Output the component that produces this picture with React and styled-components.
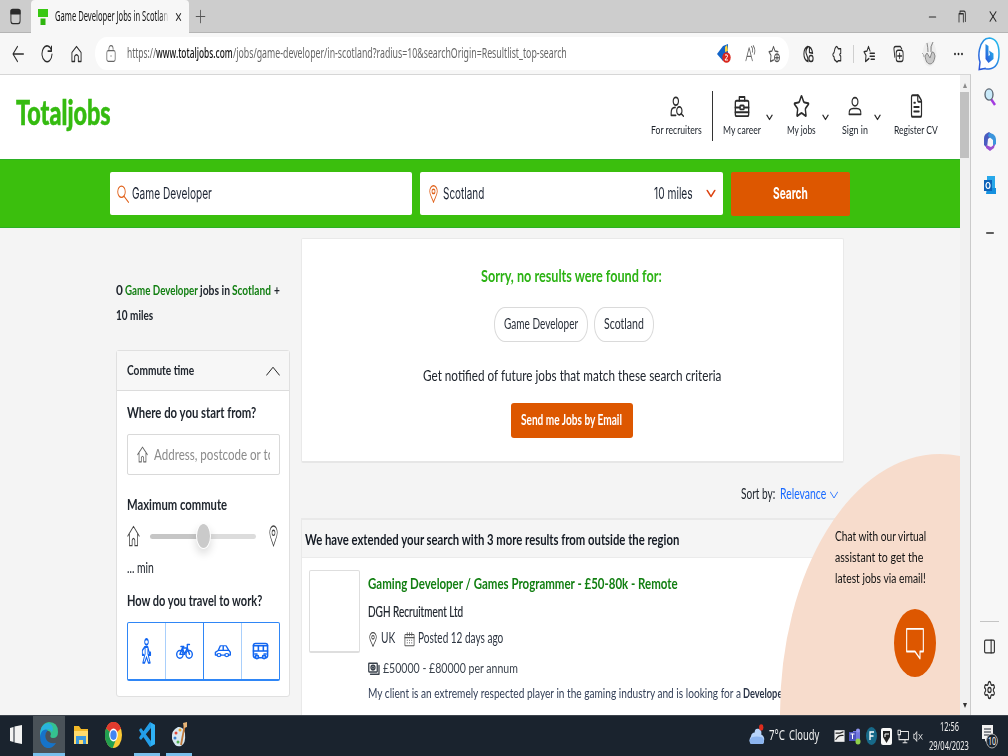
import React, { useLayoutEffect, useRef, useState } from "react";
import styled, { createGlobalStyle } from "styled-components";
import { Star, FileText, Settings, PanelRight, Plus, X, Minus } from "lucide-react";

const GlobalStyle = createGlobalStyle`
  * { box-sizing: border-box; }
  body { margin: 0; overflow: hidden; }
`;

const FONT = {
  page: 'Lato, "Open Sans", sans-serif',
  input: 'Inter, "Liberation Sans", sans-serif',
  system: '"Noto Sans", "Open Sans", sans-serif',
};

/* ---------- condensed text ---------- */

const FitBox = styled.span`
  display: block;
  flex: none;
  width: ${(p) => p.$w}px;
  height: ${(p) => p.$lh || 20}px;
  line-height: ${(p) => (p.$lh || 20) - 2}px;
  font-family: ${(p) => FONT[p.$font || "page"]};
  font-size: ${(p) => p.$size || 15}px;
  font-weight: ${(p) => p.$weight || 400};
  color: ${(p) => p.$color || "#20262e"};
  margin-left: ${(p) => p.$ml || 0}px;
  margin-top: ${(p) => p.$mt || 0}px;
  -webkit-text-stroke: ${(p) => p.$stroke || 0}px currentColor;
`;
const FitInner = styled.span`
  display: inline-block;
  white-space: pre;
  transform-origin: 0 50%;
`;

function Fit({ w, size, weight, color, lh, font, ml, mt, stroke, children }) {
  const ref = useRef(null);
  const [scale, setScale] = useState(1);
  useLayoutEffect(() => {
    if (ref.current.offsetWidth) setScale(w / ref.current.offsetWidth);
  }, [w, children]);
  return (
    <FitBox $w={w} $size={size} $weight={weight} $color={color} $lh={lh} $font={font} $ml={ml} $mt={mt} $stroke={stroke}>
      <FitInner ref={ref} style={{ transform: `scaleX(${scale})` }}>{children}</FitInner>
    </FitBox>
  );
}

const Slot = styled.span`
  display: flex;
  flex: none;
  align-items: center;
  justify-content: center;
  width: ${(p) => p.$w}px;
  height: ${(p) => (p.$h ? `${p.$h}px` : "auto")};
  margin-left: ${(p) => p.$ml || 0}px;
  margin-top: ${(p) => p.$mt || 0}px;
  color: ${(p) => p.$color || "#2b2b2b"};
`;

function Glyph({ w, h, box = "0 0 24 24", sw = 1.8, children, fill = "none" }) {
  return (
    <svg width={w} height={h} viewBox={box} preserveAspectRatio="none" fill={fill}
      stroke="currentColor" strokeWidth={sw} strokeLinecap="round" strokeLinejoin="round">
      {children}
    </svg>
  );
}
const stretch = { preserveAspectRatio: "none" };

const HomeGlyph = ({ w, h, sw }) => (
  <Glyph w={w} h={h} sw={sw}>
    <path d="M1.500 12 12 1.500 22.500 12M4.500 10v12.500h5v-6q2.500-4 5 0v6h5V10" />
  </Glyph>
);
const PinGlyph = ({ w, h, sw = 2 }) => (
  <Glyph w={w} h={h} sw={sw}>
    <path d="M12 23C8 17 2 13 2 8.500a10 7.500 0 0 1 20 0C22 13 16 17 12 23Z" />
    <ellipse cx="12" cy="8.500" rx="4" ry="2.800" />
  </Glyph>
);

/* ---------- window frame ---------- */

const Screen = styled.div`
  display: flex;
  flex-direction: column;
  width: 1008px;
  height: 756px;
  overflow: hidden;
  background: #f7f7f7;
`;
const TabBar = styled.div`
  display: flex;
  height: 33px;
  background: #cdcdcd;
  box-shadow: inset 0 -1px 0 #b4b4b4;
`;
const Tab = styled.div`
  display: flex;
  align-items: center;
  width: 158px;
  height: 33px;
  padding-left: 7px;
  background: #f7f7f7;
  border-radius: 4px 4px 0 0;
`;
const TitleFade = styled.span`
  width: 114px;
  margin-left: 7px;
  overflow: hidden;
  mask-image: linear-gradient(90deg, #000 92%, transparent 100%);
`;
const WindowControls = styled.div`
  display: flex;
  margin-left: auto;
`;
const Toolbar = styled.div`
  display: flex;
  align-items: center;
  flex: none;
  height: 41px;
  padding-left: 4px;
  background: #f7f7f7;
`;
const AddressPill = styled.div`
  display: flex;
  align-items: center;
  flex: none;
  width: 694px;
  height: 33px;
  margin-left: 5px;
  padding-right: 4px;
  background: #fff;
  border-radius: 12px / 17px;
`;
const PillActions = styled.div`
  display: flex;
  margin-left: auto;
`;
const ToolDivider = styled.span`
  width: 1px;
  height: 18px;
  margin: 0 1px;
  background: #cfcfcf;
`;
const Body = styled.div`
  display: flex;
  flex: none;
  height: 641px;
`;
const Page = styled.div`
  position: relative;
  flex: none;
  width: 960px;
  height: 641px;
  overflow: hidden;
  background: #f4f4f4;
  border-top: 1px solid #d6d6d6;
`;
const ScrollTrack = styled.div`
  display: flex;
  flex-direction: column;
  align-items: center;
  flex: none;
  width: 11px;
  background: #f1f1f1;
  border-top: 1px solid #d6d6d6;
  border-right: 1px solid #cbcbcb;
  padding: 8px 0 7px;
`;
const ScrollThumb = styled.div`
  width: 9px;
  height: 66px;
  margin: 4px 1px 0 0;
  background: #c1c1c1;
`;
const Arrow = styled.span`
  border-left: 2.500px solid transparent;
  border-right: 2.500px solid transparent;
  border-bottom: ${(p) => (p.$down ? "0" : "5px solid #8b8b8b")};
  border-top: ${(p) => (p.$down ? "5px solid #333" : "0")};
  margin-top: ${(p) => (p.$down ? "auto" : "0")};
`;
const Sidebar = styled.div`
  display: flex;
  flex-direction: column;
  align-items: center;
  flex: 1;
  background: #f7f7f7;
`;
const SidebarRule = styled.span`
  width: 19px;
  height: 1px;
  margin-top: auto;
  background: #c4c4c4;
`;

/* ---------- site header ---------- */

const SiteHeader = styled.header`
  display: flex;
  height: 84px;
  padding: 0 22px 0 16px;
  background: #fff;
`;
const Nav = styled.nav`
  display: flex;
  margin-left: auto;
`;
const NavEntry = styled.div`
  display: flex;
  flex-direction: column;
  align-items: center;
  margin-left: ${(p) => p.$ml || 0}px;
  padding-top: 18px;
`;
const NavDivider = styled.span`
  width: 1px;
  height: 50px;
  margin: 16px 0 0 10px;
  background: #333;
`;

function NavItem({ label, w, ml, children }) {
  return (
    <NavEntry $ml={ml}>
      <Slot $w={w} $h={26}>{children}</Slot>
      <Fit w={w} size={12} lh={14} mt={5}>{label}</Fit>
    </NavEntry>
  );
}
const NavCaret = ({ ml }) => (
  <Slot $w={8} $ml={ml} $h={84}>
    <Glyph w={7} h={7} sw={4}><path d="M3 4 12 19 21 4" /></Glyph>
  </Slot>
);

const SearchBar = styled.div`
  display: flex;
  align-items: center;
  height: 69px;
  padding-left: 110px;
  gap: 8px;
  background: #3bbf0d;
  box-shadow: inset 0 1px 0 #2cb024, inset 0 -1px 0 #2cb024;
`;
const SearchField = styled.div`
  display: flex;
  align-items: center;
  width: ${(p) => p.$w}px;
  height: 43px;
  padding-left: 7px;
  background: #fff;
  border-radius: 2px;
`;
const OrangeButton = styled.div`
  display: flex;
  align-items: center;
  justify-content: center;
  width: ${(p) => p.$w}px;
  height: ${(p) => p.$h}px;
  margin-top: ${(p) => p.$mt || 0}px;
  background: #dd5700;
  border-radius: ${(p) => p.$r || 2}px;
`;

/* ---------- content ---------- */

const Columns = styled.div`
  display: flex;
  align-items: flex-start;
  padding-left: 116px;
`;
const Filters = styled.aside`
  width: 174px;
  padding-top: 51px;
`;
const SummaryLine = styled.div`
  display: flex;
  height: 25px;
`;
const FilterCard = styled.section`
  height: 347px;
  margin-top: 21px;
  background: #fff;
  border: 1px solid #e0e0e0;
  border-radius: 3px;
`;
const FilterHead = styled.div`
  display: flex;
  align-items: center;
  height: 40px;
  padding: 0 9px 0 10px;
  justify-content: space-between;
  background: #f7f7f7;
  border-bottom: 1px solid #dcdcdc;
`;
const FilterBody = styled.div`
  padding: 12px 9px 0 10px;
`;
const AddressInput = styled.div`
  display: flex;
  align-items: center;
  height: 41px;
  margin-top: 11px;
  padding-left: 9px;
  border: 1px solid #d9d9d9;
  border-radius: 2px;
`;
const Placeholder = styled.div`
  width: 116px;
  margin-left: 6px;
  overflow: hidden;
`;
const SliderRow = styled.div`
  display: flex;
  align-items: center;
  height: 24px;
  margin-top: 9px;
`;
const Track = styled.div`
  display: flex;
  align-items: center;
  justify-content: center;
  width: 106px;
  height: 5px;
  margin: 0 13px 0 10px;
  border-radius: 3px;
  background: linear-gradient(90deg, #c6c6c6 50%, #dcdcdc 50%);
`;
const Thumb = styled.span`
  flex: none;
  width: 15px;
  height: 26px;
  border: 1px solid #fff;
  border-radius: 50%;
  background: #cacaca;
  box-shadow: 0 5px 9px rgba(0, 0, 0, 0.14);
`;
const ModeGroup = styled.div`
  display: flex;
  height: 59px;
  margin-top: 11px;
  border: 1px solid #2f86f6;
  border-bottom-width: 2px;
  border-radius: 2px;
`;
const Mode = styled.div`
  display: flex;
  flex: 1;
  align-items: center;
  justify-content: center;
  color: #1266f1;
  border-right: ${(p) => (p.$edge ? `1px solid ${p.$edge}` : "0")};
`;
const Results = styled.main`
  width: 543px;
  margin-left: 11px;
  padding-top: 10px;
`;
const EmptyCard = styled.section`
  display: flex;
  flex-direction: column;
  align-items: center;
  height: 225px;
  padding: 28px 2px 0 0;
  background: #fff;
  border: 1px solid #e9e9e9;
  border-bottom: 2px solid #e6e6e6;
  border-radius: 2px;
`;
const Pills = styled.div`
  display: flex;
  gap: 6px;
  margin: 20px 0 0 5px;
`;
const Pill = styled.div`
  display: flex;
  align-items: center;
  justify-content: center;
  width: ${(p) => p.$w}px;
  height: 35px;
  border: 1px solid #dadada;
  border-radius: 11px / 17px;
`;
const SortRow = styled.div`
  display: flex;
  align-items: center;
  height: 20px;
  margin: 22px 0 13px 440px;
`;
const ResultList = styled.section`
  height: 210px;
  background: #fff;
  border: 1px solid #e9e9e9;
  border-top: 2px solid #e9e9e9;
`;
const ListHead = styled.div`
  height: 38px;
  padding: 10px 0 0 3px;
  background: #f5f5f5;
  border-bottom: 1px solid #ebebeb;
`;
const Job = styled.article`
  display: flex;
  padding: 12px 0 0 7px;
`;
const LogoBox = styled.div`
  width: 51px;
  height: 83px;
  border: 1px solid #dedede;
  border-bottom-width: 2px;
  border-radius: 2px;
`;
const JobText = styled.div`
  margin-left: 8px;
  padding-top: 4px;
`;
const JobLine = styled.div`
  display: flex;
  align-items: center;
  height: 20px;
  margin-top: ${(p) => p.$mt || 0}px;
`;

/* ---------- chat bubble lies over the page corner ---------- */

const ChatBlob = styled.div`
  position: absolute;
  left: 780px;
  top: 379px;
  width: 320px;
  height: 520px;
  padding: 73px 0 0 55px;
  border-radius: 50%;
  background: #f7dccc;
`;
const ChatButton = styled.div`
  display: flex;
  align-items: center;
  justify-content: center;
  width: 42px;
  height: 68px;
  margin: 19px 0 0 59px;
  border-radius: 50%;
  background: #dd5700;
  color: #fff;
`;

/* ---------- taskbar ---------- */

const Taskbar = styled.div`
  display: flex;
  flex: none;
  height: 41px;
  background: #1a232e;
  border-top: 1px solid #3c434c;
`;
const TaskCell = styled.div`
  display: flex;
  align-items: center;
  justify-content: center;
  width: ${(p) => p.$w || 32}px;
  margin-right: ${(p) => p.$mr || 0}px;
  background: ${(p) => (p.$active ? "#4a5259" : "none")};
  border-bottom: 3px solid ${(p) => (p.$open ? "#79bfec" : "transparent")};
`;
const Tray = styled.div`
  display: flex;
  align-items: center;
  margin-left: auto;
  padding-right: 10px;
`;
const Clock = styled.div`
  display: flex;
  flex-direction: column;
  align-items: center;
  width: 48px;
  margin-top: 2px;
`;

export default function App() {
  return (
    <>
      <GlobalStyle />
      <Screen>
        <TabBar>
          <Slot $w={31}>
            <Glyph w={11} h={17} sw={2}>
              <rect x="2" y="2" width="20" height="20" rx="4" />
              <path d="M2 3h20v5H2z" fill="currentColor" />
            </Glyph>
          </Slot>
          <Tab>
            <svg width="10" height="16" viewBox="0 0 10 16">
              <path d="M0 0h10v8H0z" fill="#38c812" /><path d="M2.500 9.500h5V16h-5z" fill="#2fb50f" />
            </svg>
            <TitleFade><Fit w={113} size={13.5} font="system" color="#111">Game Developer Jobs in Scotlan</Fit></TitleFade>
            <Slot $w={18}><X width={9} height={14} {...stretch} /></Slot>
          </Tab>
          <Slot $w={23}><Plus width={15} height={21} strokeWidth={1.400} color="#555" {...stretch} /></Slot>
          <WindowControls>
            <Slot $w={30}><Minus width={11} height={14} {...stretch} /></Slot>
            <Slot $w={30}>
              <Glyph w={8} h={13} sw={2.500}><path d="M3 22V7h13v15M6 6V2h12q4 0 4 5v14" /></Glyph>
            </Slot>
            <Slot $w={31}><X width={12} height={19} strokeWidth={1.600} {...stretch} /></Slot>
          </WindowControls>
        </TabBar>

        <Toolbar>
          <Slot $w={28}>
            <Glyph w={12} h={18} sw={1.800}><path d="M23 12H2M11 2 2 12l9 10" /></Glyph>
          </Slot>
          <Slot $w={30}>
            <Glyph w={12} h={19} sw={2}><path d="M21 3v6h-7M21 8A10 10 0 1 0 22 13" /></Glyph>
          </Slot>
          <Slot $w={28}>
            <Glyph w={11} h={18} sw={2}><path d="M2 10 12 2l10 8v12h-6v-7q-4-4-8 0v7H2Z" /></Glyph>
          </Slot>
          <AddressPill>
            <Slot $w={32} $color="#666">
              <Glyph w={10} h={17} sw={1.800}>
                <rect x="2" y="8" width="20" height="15" rx="3" /><path d="M7 8V5a5 4 0 0 1 10 0v1" /><path d="M12 15v1" />
              </Glyph>
            </Slot>
            <Fit w={29} size={14} font="system" color="#666">https://</Fit>
            <Fit w={77} size={14} font="system" color="#111" weight={500}>www.totaljobs.com</Fit>
            <Fit w={334} size={14} font="system" color="#666">/jobs/game-developer/in-scotland?radius=10&amp;searchOrigin=Resultlist_top-search</Fit>
            <PillActions>
              <Slot $w={27}>
                <svg width="14" height="19" viewBox="0 0 14 19">
                  <path d="M0 10 6 2 11 0v12L6 17Z" fill="#1264c8" /><path d="M8 3 10 1l1 6-3 1Z" fill="#ffd33b" />
                  <ellipse cx="9.500" cy="13.500" rx="4.200" ry="5.300" fill="#d9281f" />
                  <path d="M8 11q3-1 2.500 1.500L8 16h3" stroke="#fff" fill="none" />
                </svg>
              </Slot>
              <Slot $w={26} $color="#666">
                <Glyph w={11} h={17} sw={1.700}><path d="M2 22 9 4l7 18M4.500 16h9M14 2q4 3 2 8M18 1q6 6 2 12" /></Glyph>
              </Slot>
              <Slot $w={22} $color="#555">
                <Glyph w={12} h={18} sw={1.800}>
                  <path d="M11 20 5 22l1-8-4-5 6-1 3-6 3 6 6 1" /><ellipse cx="18" cy="17" rx="5" ry="5" /><path d="M18 14v6M15 17h6" />
                </Glyph>
              </Slot>
            </PillActions>
          </AddressPill>
          <Slot $w={28} $ml={5}>
            <Glyph w={11} h={18} sw={2.300}>
              <path d="M11 22Q2 20 2 12T10 2q9 0 11 9M10 3Q4 8 8 13t3 9M14 3v7l7 1" /><rect x="13" y="14" width="9" height="8" rx="4" />
            </Glyph>
          </Slot>
          <Slot $w={30}>
            <Glyph w={10} h={18} sw={2.300}><path d="M7 5q4-6 8 0h6v6q-5 1.500 0 4v6h-6q-3 3-6 0-4-1-4-5-6-3 0-6Z" /></Glyph>
          </Slot>
          <ToolDivider />
          <Slot $w={28}>
            <Glyph w={12} h={18} sw={2}><path d="M12 18 5 22l1-8-4-5 6-1 3-6 3 6M14 11h9M14 15h9M16 19h7" /></Glyph>
          </Slot>
          <Slot $w={30}>
            <Glyph w={11} h={18} sw={2}><rect x="7" y="7" width="15" height="15" rx="4" /><path d="M4 16 2 5q0-3 4-3h10l3 3M14.500 11v7M10 14.500h9" /></Glyph>
          </Slot>
          <Slot $w={32}>
            <svg width="16" height="26" viewBox="0 0 16 26">
              <ellipse cx="8.500" cy="13" rx="7" ry="12.500" fill="#eeeeee" />
              <path d="M6 2q1 5 1 9M12 1q-3 4-2 10M4 15q1 8 5 8t5-8q-1-5-3-4l-2 6-3-5Z" fill="#c8c8c8" stroke="#8a8a8a" strokeWidth="1" />
              <path d="M1 12q2 1 2 4" stroke="#aaa" fill="none" />
            </svg>
          </Slot>
          <Slot $w={26}>
            <svg width="9" height="4" viewBox="0 0 9 4" fill="#222"><ellipse cx="1" cy="2" rx="0.900" ry="1.200" /><ellipse cx="4.500" cy="2" rx="0.900" ry="1.200" /><ellipse cx="8" cy="2" rx="0.900" ry="1.200" /></svg>
          </Slot>
          <Slot $w={36}>
            <svg width="22" height="34" viewBox="0 0 22 34">
              <defs>
                <linearGradient id="bingRing" x1="0" y1="1" x2="1" y2="0"><stop offset="0" stopColor="#2b50d8" /><stop offset="1" stopColor="#25c3ee" /></linearGradient>
              </defs>
              <path d="M1.200 32.500 2 25Q0 20 1.500 12.500 4 1 11.500 1 21 2 21 16.500T11 32q-4 0-4-.5Z" fill="#fff" stroke="url(#bingRing)" strokeWidth="1.500" />
              <path d="M7.500 7v15l3 4 5-4v-5.500l-4.500-3 1 4.500-1.500 1V9Z" fill="url(#bingRing)" />
            </svg>
          </Slot>
        </Toolbar>

        <Body>
          <Page>
            <SiteHeader>
              <Fit w={95} size={33.500} weight={900} color="#35bb10" lh={42} mt={17} stroke={0.500}>Totaljobs</Fit>
              <Nav>
                <NavItem label="For recruiters" w={51}>
                  <Glyph w={14} h={21} sw={2}>
                    <circle cx="10" cy="6" r="4.500" /><path d="M10 22H2v-3q0-6 7-6" /><ellipse cx="16" cy="17" rx="4.500" ry="4.500" /><path d="m19 20 4 3" />
                  </Glyph>
                </NavItem>
                <NavDivider />
                <NavItem label="My career" w={38} ml={10}>
                  <Glyph w={16} h={23} sw={2}>
                    <rect x="2" y="6" width="20" height="16" rx="2" /><path d="M8 6V2h8v4M2 13h7M15 13h7M2 18h20" /><rect x="9" y="11" width="6" height="4" rx="1" />
                  </Glyph>
                </NavItem>
                <NavCaret ml={4} />
                <NavItem label="My jobs" w={29} ml={14}><Star width={17} height={25} strokeWidth={2} {...stretch} /></NavItem>
                <NavCaret ml={5} />
                <NavItem label="Sign in" w={26} ml={13}>
                  <Glyph w={14} h={20} sw={2}><ellipse cx="12" cy="7" rx="5" ry="5" /><path d="M2 22q-1-7 7-7h6q8 0 7 7Z" /></Glyph>
                </NavItem>
                <NavCaret ml={5} />
                <NavItem label="Register CV" w={44} ml={13}><FileText width={15} height={26} strokeWidth={1.900} {...stretch} /></NavItem>
              </Nav>
            </SiteHeader>

            <SearchBar>
              <SearchField $w={302}>
                <Glyph w={12} h={18} sw={1.800}><g stroke="#e0611a"><circle cx="9" cy="9" r="7.500" /><path d="m14 15 9 8" /></g></Glyph>
                <Fit w={80} size={16.500} font="input" color="#1c2433" ml={3}>Game Developer</Fit>
              </SearchField>
              <SearchField $w={303}>
                <Slot $w={12} $color="#e0611a"><PinGlyph w={9} h={18} /></Slot>
                <Fit w={41} size={16.500} font="input" color="#1c2433" ml={4}>Scotland</Fit>
                <Fit w={39} size={16.500} font="input" color="#1c2433" ml={170}>10 miles</Fit>
                <Slot $w={10} $ml={13} $color="#dd4310"><Glyph w={10} h={9} sw={4}><path d="M3 4 12 20 21 4" /></Glyph></Slot>
              </SearchField>
              <OrangeButton $w={119} $h={44}><Fit w={35} size={16.500} font="input" weight={700} color="#fff">Search</Fit></OrangeButton>
            </SearchBar>

            <Columns>
              <Filters>
                <SummaryLine>
                  <Fit w={7} size={13.500} weight={700} lh={25}>0</Fit>
                  <Fit w={73} size={13.500} weight={700} lh={25} ml={2} color="#127f12">Game Developer</Fit>
                  <Fit w={30} size={13.500} weight={700} lh={25} ml={2}>jobs in</Fit>
                  <Fit w={39} size={13.500} weight={700} lh={25} ml={2} color="#127f12">Scotland</Fit>
                  <Fit w={6} size={13.500} weight={700} lh={25} ml={3}>+</Fit>
                </SummaryLine>
                <SummaryLine><Fit w={37} size={13.500} weight={700} lh={25}>10 miles</Fit></SummaryLine>
                <FilterCard>
                  <FilterHead>
                    <Fit w={67} size={13} weight={700}>Commute time</Fit>
                    <Glyph w={14} h={10} sw={1.700}><path d="M1 22 12 3 23 22" /></Glyph>
                  </FilterHead>
                  <FilterBody>
                    <Fit w={129} size={16} weight={700}>Where do you start from?</Fit>
                    <AddressInput>
                      <Slot $w={11} $color="#666"><HomeGlyph w={11} h={17} sw={1.700} /></Slot>
                      <Placeholder><Fit w={120} size={16} color="#8b8b8b">Address, postcode or to</Fit></Placeholder>
                    </AddressInput>
                    <Fit w={100} size={16} weight={700} mt={20}>Maximum commute</Fit>
                    <SliderRow>
                      <Slot $w={13} $color="#444"><HomeGlyph w={13} h={22} sw={1.400} /></Slot>
                      <Track><Thumb /></Track>
                      <Slot $w={9} $color="#444"><PinGlyph w={9} h={22} sw={1.600} /></Slot>
                    </SliderRow>
                    <Fit w={27} size={15} mt={10}>... min</Fit>
                    <Fit w={135} size={16} weight={700} mt={13}>How do you travel to work?</Fit>
                    <ModeGroup>
                      <Mode $edge="#a9cffb">
                        <Glyph w={11} h={27} sw={1.900}>
                          <ellipse cx="12" cy="3.500" rx="4" ry="2.500" /><path d="M8 8h7l3 5h3v2h-5M8 8 3 11v4h3M9 9v5l-5 8h4l4-5 4 5h4l-5-8V9" />
                        </Glyph>
                      </Mode>
                      <Mode $edge="#2f86f6">
                        <Glyph w={17} h={17} sw={2}>
                          <ellipse cx="5.500" cy="16" rx="4.500" ry="5.500" /><ellipse cx="18.500" cy="16" rx="4.500" ry="5.500" /><path d="M5.500 16 9 7h7l3 9M9 7l3 9H6M12 16l4-9V2h3M7 5h4" />
                        </Glyph>
                      </Mode>
                      <Mode $edge="#a9cffb">
                        <Glyph w={17} h={14} sw={2}>
                          <path d="M2 19v-5l4-3 3-8h8l4 8 2 3v5ZM6 11h15M13 3v8" /><circle cx="7" cy="19" r="2.700" fill="#fff" /><circle cx="18" cy="19" r="2.700" fill="#fff" />
                        </Glyph>
                      </Mode>
                      <Mode>
                        <Glyph w={17} h={18} sw={2.200}>
                          <rect x="2" y="2" width="20" height="19" rx="3" /><path d="M2 5h20M2 12h20M9 5v7M16 5v7M4 16h3M17 16h3" /><circle cx="7" cy="20" r="2.200" fill="#fff" /><circle cx="17" cy="20" r="2.200" fill="#fff" />
                        </Glyph>
                      </Mode>
                    </ModeGroup>
                  </FilterBody>
                </FilterCard>
              </Filters>

              <Results>
                <EmptyCard>
                  <Fit w={181} size={17} weight={700} color="#2cb314">Sorry, no results were found for:</Fit>
                  <Pills>
                    <Pill $w={94}><Fit w={74} size={14.500} color="#2a303a">Game Developer</Fit></Pill>
                    <Pill $w={60}><Fit w={40} size={14.500} color="#2a303a">Scotland</Fit></Pill>
                  </Pills>
                  <Fit w={298} size={16} mt={24}>Get notified of future jobs that match these search criteria</Fit>
                  <OrangeButton $w={122} $h={35} $mt={17} $r={3}><Fit w={101} size={14.500} weight={700} color="#fff">Send me Jobs by Email</Fit></OrangeButton>
                </EmptyCard>
                <SortRow>
                  <Fit w={34} size={14.500}>Sort by:</Fit>
                  <Fit w={46} size={14.500} color="#1769ff" ml={5}>Relevance</Fit>
                  <Slot $w={8} $ml={4} $color="#1769ff"><Glyph w={8} h={8} sw={2.500}><path d="M1 3 12 21 23 3" /></Glyph></Slot>
                </SortRow>
                <ResultList>
                  <ListHead><Fit w={374} size={15.500} weight={700} color="#151b24">We have extended your search with 3 more results from outside the region</Fit></ListHead>
                  <Job>
                    <LogoBox />
                    <JobText>
                      <Fit w={310} size={15} weight={700} color="#127f12">Gaming Developer / Games Programmer - £50-80k - Remote</Fit>
                      <Fit w={95} size={14.500} mt={9} stroke={0.200}>DGH Recruitment Ltd</Fit>
                      <JobLine $mt={6}>
                        <Slot $w={9} $color="#444"><PinGlyph w={8} h={15} /></Slot>
                        <Fit w={14} size={14.500} ml={4} color="#2c3440">UK</Fit>
                        <Slot $w={11} $ml={9} $color="#555">
                          <Glyph w={11} h={15} sw={1.700}><rect x="2" y="4" width="20" height="18" rx="1" /><path d="M2 9h20M7 1v5M17 1v5M12 1v5M7 13v.5M12 13v.5M17 13v.5M7 17v.5M12 17v.5M17 17v.5" /></Glyph>
                        </Slot>
                        <Fit w={85} size={14.500} ml={3} color="#2c3440">Posted 12 days ago</Fit>
                      </JobLine>
                      <JobLine $mt={10}>
                        <Slot $w={12} $color="#3a424c">
                          <Glyph w={12} h={14} sw={2.600}><rect x="1.500" y="2" width="17" height="15" rx="1" /><ellipse cx="10" cy="9.500" rx="4" ry="4" /><path d="M22 6v15H5" /><circle cx="10" cy="9.500" r="1" /></Glyph>
                        </Slot>
                        <Fit w={135} size={14} ml={3} color="#3a424c">£50000 - £80000 per annum</Fit>
                      </JobLine>
                      <JobLine $mt={5}>
                        <Fit w={373} size={14} color="#36425a">My client is an extremely respected player in the gaming industry and is looking for a</Fit>
                        <Fit w={43} size={14} weight={700} color="#2b3548" ml={2}>Developer</Fit>
                      </JobLine>
                    </JobText>
                  </Job>
                </ResultList>
              </Results>
            </Columns>

            <ChatBlob>
              <Fit w={91} size={13.500} lh={21} color="#111">Chat with our virtual</Fit>
              <Fit w={88} size={13.500} lh={21} color="#111">assistant to get the</Fit>
              <Fit w={91} size={13.500} lh={21} color="#111">latest jobs via email!</Fit>
              <ChatButton>
                <Glyph w={20} h={34} sw={1.300}><path d="M2 2h20v16h-4v5l-6-5H2Z" /></Glyph>
              </ChatButton>
            </ChatBlob>
          </Page>
          <ScrollTrack>
            <Arrow />
            <ScrollThumb />
            <Arrow $down />
          </ScrollTrack>
          <Sidebar>
            <Slot $w={36} $h={18} $mt={14}>
              <svg width="12" height="18" viewBox="0 0 12 18"><path d="m7 11 4 6" stroke="#a33be0" strokeWidth="2.400" /><ellipse cx="5" cy="6.500" rx="4" ry="5.600" fill="#c9eafa" stroke="#58636f" strokeWidth="1.300" /></svg>
            </Slot>
            <Slot $w={36} $h={20} $mt={25}>
              <svg width="12" height="19" viewBox="0 0 12 19"><path d="M5 0Q0 2 0 6v7l3 3 1-9 5-4Z" fill="#4a5cc0" /><path d="m5 1 4 1q3 2 3 6v4l-3 3V8L4 4Z" fill="#3b95dc" /><path d="m2 13 5 2 4-3-1 4-4 3-4-3Z" fill="#9a4fd0" /><ellipse cx="6.200" cy="9.500" rx="2" ry="3" fill="#f7f7f7" /></svg>
            </Slot>
            <Slot $w={36} $h={20} $mt={24}>
              <svg width="12" height="18" viewBox="0 0 12 18"><path d="M3 0h8v16H3z" fill="#28a8ea" /><path d="M3 12h9v6H2z" fill="#1490df" /><path d="M0 4h8v11H0z" fill="#0d62b8" /><ellipse cx="4" cy="9.500" rx="2" ry="3" stroke="#fff" strokeWidth="1.200" fill="none" /></svg>
            </Slot>
            <Slot $w={36} $h={20} $mt={28}><Minus width={12} height={20} strokeWidth={1.800} {...stretch} /></Slot>
            <SidebarRule />
            <Slot $w={36} $h={20} $mt={14}><PanelRight width={13} height={17} strokeWidth={2} {...stretch} /></Slot>
            <Slot $w={36} $h={22} $mt={23}><Settings width={13} height={20} strokeWidth={2} {...stretch} /></Slot>
            <Slot $w={36} $h={14} />
          </Sidebar>
        </Body>

        <Taskbar>
          <TaskCell $mr={1}>
            <svg width="12" height="19" viewBox="0 0 12 19" fill="#f2f2f2"><path d="m0 3 3.500-1v15L0 16ZM4.500 1.500 12 0v19l-7.500-1.500Z" /></svg>
          </TaskCell>
          <TaskCell $active $open>
            <svg width="18" height="26" viewBox="0 0 18 26">
              <path d="M0 14Q0 1 9 0q9 0 9 10 0 6-5 6-4 0-2-4-1-4-5-3-5 1-6 5Z" fill="#35c18f" />
              <path d="M0 14Q0 2 8 1q7 2 4 9-2-4-6-2-3 1-3 9Z" fill="#29b3dd" />
              <path d="M0 14q2-8 8-6-4 4-2 9t10 4q-4 6-9 5Q0 24 0 14Z" fill="#1673c9" />
            </svg>
          </TaskCell>
          <TaskCell>
            <svg width="16" height="20" viewBox="0 0 16 20"><path d="M1 1h5l2 3h7v15H1z" fill="#f4b927" /><path d="M1 6h14v13H1z" fill="#ffdb6c" /><path d="M3 11h10v8h-3v-4H6v4H3z" fill="#3c98dd" /></svg>
          </TaskCell>
          <TaskCell $mr={5}>
            <svg width="17" height="26" viewBox="0 0 48 48" preserveAspectRatio="none">
              <circle cx="24" cy="24" r="24" fill="#fcc934" />
              <path d="M24 24 3 12a24 24 0 0 1 42 0Z" fill="#e33b2e" /><path d="M24 12h21q-9-12-21-12Z" fill="#e33b2e" />
              <path d="M3 12a24 24 0 0 0 19 36l10-18-8-6Z" fill="#229f50" />
              <circle cx="24" cy="24" r="12" fill="#fff" /><circle cx="24" cy="24" r="9" fill="#4285f4" />
            </svg>
          </TaskCell>
          <TaskCell $w={26} $mr={6} $open>
            <svg width="17" height="25" viewBox="0 0 17 25"><path d="M11 0 16 3v19l-5 3L1 10l-1-2 2-2 10 13V6L2 18l-2-2 1-2Z" fill="#239ee8" /><path d="m12 1 4 2v19l-4 2Z" fill="#2fb1f5" /></svg>
          </TaskCell>
          <TaskCell $w={26} $open>
            <svg width="17" height="26" viewBox="0 0 17 26">
              <path d="M7 5Q0 8 1 17q3 9 9 7 5-2 4-13-2-7-7-6Z" fill="#d8e9f3" />
              <circle cx="5" cy="11" r="1.500" fill="#e34c3c" /><circle cx="9" cy="8" r="1.500" fill="#f2a62b" /><circle cx="4" cy="16" r="1.500" fill="#3b82d0" /><circle cx="7" cy="20" r="1.500" fill="#50b050" />
              <path d="M14 2 10 23" stroke="#c27a3c" strokeWidth="1.800" /><path d="m12 1 4-1v5l-3 1Z" fill="#e7b477" />
            </svg>
          </TaskCell>
          <Tray>
            <Slot $w={17} $mt={-4}>
              <svg width="16" height="21" viewBox="0 0 17 22"><path d="M2 21q-3-4 0-8 1-4 4-4 0-5 4-4 4 1 3 6 4 2 3 6 0 4-2 4Z" fill="#b7d4fa" /><path d="M2 21q-3-4 1-7 5-2 11 0 3 2 1 7Z" fill="#8bb4ef" /><ellipse cx="13" cy="3.500" rx="2.300" ry="3.300" fill="#de2c1d" /></svg>
            </Slot>
            <Fit w={16} size={14} font="system" color="#f1f1f1" ml={4}>7°C</Fit>
            <Fit w={30} size={14} font="system" color="#f1f1f1" ml={4}>Cloudy</Fit>
            <Slot $w={16} $ml={12} $color="#222">
              <Glyph w={11} h={14} sw={2}><rect x="1" y="2" width="22" height="20" fill="#eee" stroke="none" /><path d="M4 18q5-8 16-7M4 7h9l7-2" /></Glyph>
            </Slot>
            <Slot $w={16}>
              <svg width="12" height="17" viewBox="0 0 12 17"><path d="M4 3h7v10H4z" fill="#7378df" /><circle cx="9" cy="2.500" r="2" fill="#8f94ee" /><path d="M0 4h7v9H0z" fill="#4b53bc" /><path d="M1.500 6h4M3.500 6v5" stroke="#fff" /><ellipse cx="9" cy="13.500" rx="2.500" ry="3" fill="#8fd14b" /></svg>
            </Slot>
            <Slot $w={16}>
              <svg width="11" height="18" viewBox="0 0 11 18"><ellipse cx="5.500" cy="9" rx="5.500" ry="9" fill="#176989" /><path d="M4 13V5h4M4 9h3.500" stroke="#fff" fill="none" strokeWidth="1.300" /></svg>
            </Slot>
            <Slot $w={15}>
              <svg width="11" height="17" viewBox="0 0 11 17"><rect width="11" height="17" rx="2" fill="#f7f7f7" /><path d="M2 3h7v6l-3.500 6L2 9Z" fill="#222" /><path d="M4 9V6h4" stroke="#fff" fill="none" /></svg>
            </Slot>
            <Slot $w={17} $color="#e8e8e8">
              <Glyph w={12} h={15} sw={1.800}><path d="M8 4h15v13H8M12 22h8M16 17v5M2 2v7h5V2ZM4 9v8h4" /></Glyph>
            </Slot>
            <Slot $w={14} $color="#e8e8e8">
              <Glyph w={10} h={13} sw={1.800}><path d="M2 8v8h3l4 5V3L5 8ZM14 8l8 9M22 8l-8 9" /></Glyph>
            </Slot>
            <Clock>
              <Fit w={19} size={12.500} font="system" color="#eee" lh={19}>12:56</Fit>
              <Fit w={40} size={12} font="system" color="#eee" lh={19}>29/04/2023</Fit>
            </Clock>
            <Slot $w={17} $ml={8}>
              <svg width="17" height="26" viewBox="0 0 17 26">
                <path d="M1 2h11v14H6l-2 3v-3H1Z" fill="#f1f1f1" /><path d="M3 6h7M3 9h7M3 12h5" stroke="#1a232e" />
                <ellipse cx="11" cy="18" rx="5.500" ry="7" fill="#1a232e" stroke="#aaa" />
                <text x="7" y="22" fontFamily="Noto Sans" fontSize="10" textLength="8" lengthAdjust="spacingAndGlyphs" fill="#fff">10</text>
              </svg>
            </Slot>
          </Tray>
        </Taskbar>
      </Screen>
    </>
  );
}
